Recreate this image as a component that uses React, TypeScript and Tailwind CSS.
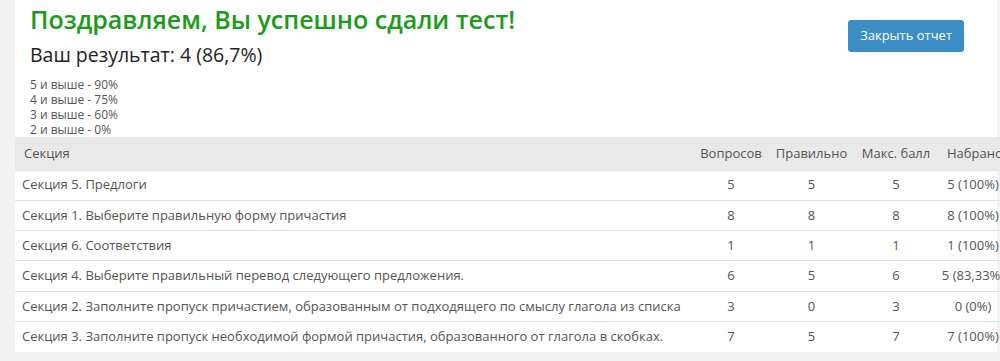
const rows = [
  { name: "Секция 5. Предлоги", total: 5, right: 5, max: 5, got: "5 (100%)" },
  { name: "Секция 1. Выберите правильную форму причастия", total: 8, right: 8, max: 8, got: "8 (100%)" },
  { name: "Секция 6. Соответствия", total: 1, right: 1, max: 1, got: "1 (100%)" },
  { name: "Секция 4. Выберите правильный перевод следующего предложения.", total: 6, right: 5, max: 6, got: "5 (83,33%)" },
  { name: "Секция 2. Заполните пропуск причастием, образованным от подходящего по смыслу глагола из списка", total: 3, right: 0, max: 3, got: "0 (0%)" },
  { name: "Секция 3. Заполните пропуск необходимой формой причастия, образованного от глагола в скобках.", total: 7, right: 5, max: 7, got: "7 (100%)" },
];

const scale = ["5 и выше - 90%", "4 и выше - 75%", "3 и выше - 60%", "2 и выше - 0%"];

export default function App() {
  return (
    <div className="w-[1000px] h-[361px] overflow-hidden bg-[#f3f3f3] pl-[15px] font-['Open_Sans',sans-serif]">
      <div className="w-[982px] bg-white">
        {/* result summary */}
        <div className="flex justify-between pl-[15px] pr-[33px]">
          <div>
            <h1 className="text-[25px] leading-[36px] font-semibold text-[#1a9c1a] pt-[1px]">
              Поздравляем, Вы успешно сдали тест!
            </h1>
            <div className="text-[19.5px] leading-[28px] text-[#222] mt-[4px]">Ваш результат: 4 (86,7%)</div>
            <div className="mt-[8px] text-[12px] leading-[15px] text-[#555]">
              {scale.map((s) => (
                <div key={s}>{s}</div>
              ))}
            </div>
          </div>
          <button className="mt-[20px] h-[32px] px-[12px] rounded-[3px] bg-[#3b8fc4] text-white text-[13px]">
            Закрыть отчет
          </button>
        </div>

        {/* per-section table */}
        <table className="w-[993px] border-collapse text-[13px] text-[#555]">
          <thead>
            <tr className="bg-[#e9e9e9] h-[33px]">
              <th className="text-left font-normal pl-[9px]">Секция</th>
              <th className="font-normal w-[76px]">Вопросов</th>
              <th className="font-normal w-[85px]">Правильно</th>
              <th className="font-normal w-[84px]">Макс. балл</th>
              <th className="font-normal w-[70px] text-left pl-[9px] whitespace-nowrap">Набрано</th>
            </tr>
          </thead>
          <tbody>
            {rows.map((r) => (
              <tr key={r.name} className="h-[30.3px] border-t border-[#dde6e6]">
                <td className="pl-[7px] whitespace-nowrap">{r.name}</td>
                <td className="text-center">{r.total}</td>
                <td className="text-center">{r.right}</td>
                <td className="text-center">{r.max}</td>
                <td className="text-center whitespace-nowrap">{r.got}</td>
              </tr>
            ))}
          </tbody>
        </table>
      </div>
    </div>
  );
}
